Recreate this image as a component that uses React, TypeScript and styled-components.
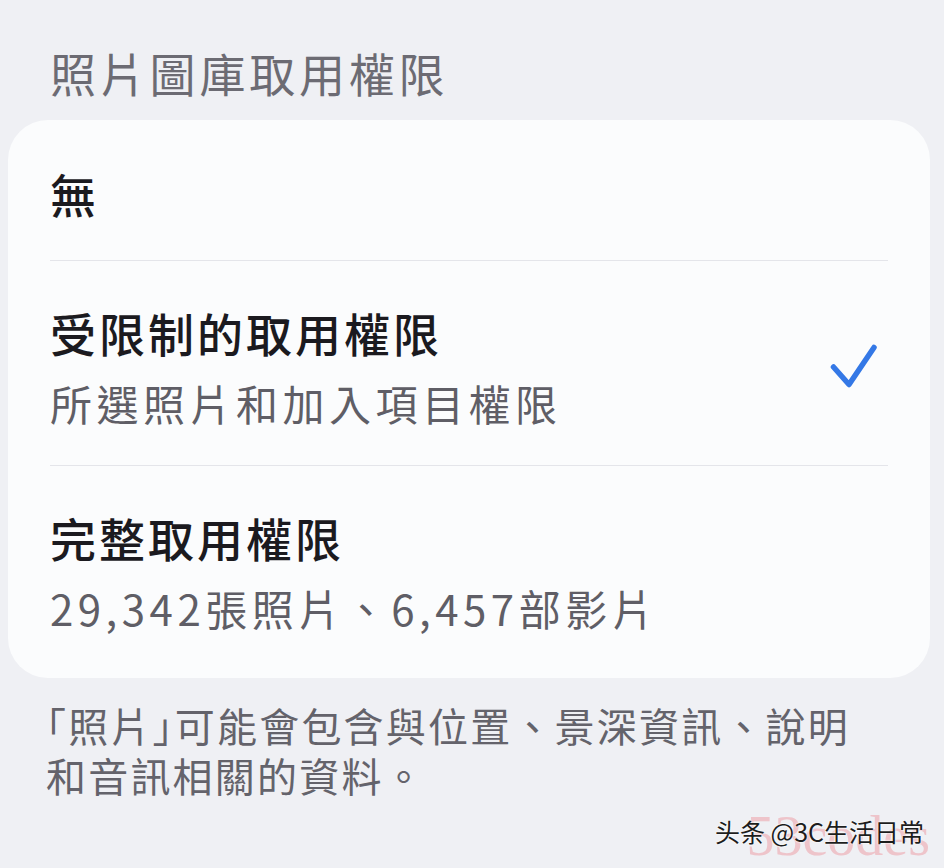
import * as React from 'react';
import styled, { createGlobalStyle } from 'styled-components';

const GlobalStyle = createGlobalStyle`
  html, body {
    margin: 0;
    padding: 0;
    background: #eff0f4;
  }
  body {
    font-family: "Noto Sans CJK TC", "Noto Sans", sans-serif;
    -webkit-font-smoothing: antialiased;
  }
`;

type Option = {
  id: string;
  title: string;
  subtitle?: string;
  selected?: boolean;
};

const options: Option[] = [
  { id: 'none', title: '無' },
  { id: 'limited', title: '受限制的取用權限', subtitle: '所選照片和加入項目權限', selected: true },
  { id: 'full', title: '完整取用權限', subtitle: '29,342張照片、6,457部影片' },
];

const Page = styled.div`
  position: relative;
  width: 944px;
  height: 868px;
  overflow: hidden;
  background: #eff0f4;
  padding-top: 48px;
  box-sizing: border-box;
`;

const SectionHeader = styled.div`
  margin: 0 0 24px 50px;
  font-size: 46px;
  line-height: 48px;
  letter-spacing: 3.8px;
  color: #6c6b73;
`;

const Card = styled.div`
  margin: 0 14px 0 8px;
  padding-bottom: 8px;
  background: #fbfcfd;
  border-radius: 40px;
  display: flex;
  flex-direction: column;
`;

const Row = styled.div<{ $last?: boolean }>`
  display: flex;
  align-items: center;
  min-height: 141px;
  margin: 0 42px;
  padding: 46px 0 40px;
  box-sizing: border-box;
  border-bottom: ${(p) => (p.$last ? 'none' : '1.5px solid #e4e5ea')};
`;

const Texts = styled.div`
  flex: 1;
  display: flex;
  flex-direction: column;
  gap: 24px;
`;

const Title = styled.div`
  font-size: 46px;
  line-height: 50px;
  font-weight: 500;
  letter-spacing: 3px;
  color: #1b1a1f;
`;

const Subtitle = styled.div`
  font-size: 42px;
  line-height: 44px;
  letter-spacing: 4.5px;
  color: #5f5e66;
`;

const Check = styled.svg`
  width: 48px;
  height: 48px;
  margin-right: 10px;
  flex: none;
`;

const Footer = styled.p`
  margin: 22px 80px 0 46px;
  font-size: 40px;
  line-height: 50px;
  letter-spacing: 2.2px;
  color: #64636b;
`;

const Quote = styled.span`
  font-feature-settings: 'halt';
`;

const Watermark = styled.div`
  position: absolute;
  right: 20px;
  bottom: 22px;
  font-family: "Noto Sans CJK SC", sans-serif;
  font-size: 25px;
  line-height: 30px;
  color: #1d1d1d;
  text-shadow: 0 0 2px #fff, 0 0 2px #fff;
`;

const WatermarkBack = styled.div`
  position: absolute;
  right: 14px;
  bottom: 4px;
  font-family: "Liberation Serif", serif;
  font-size: 56px;
  line-height: 56px;
  color: rgba(236, 160, 168, 0.55);
`;

const CheckIcon = () => (
  <Check viewBox="0 0 48 48" fill="none">
    <path
      d="M3.5 25 L19 42.5 L44 5.5"
      stroke="#3478e6"
      strokeWidth="5.5"
      strokeLinecap="round"
      strokeLinejoin="round"
    />
  </Check>
);

export default function App() {
  return (
    <>
      <GlobalStyle />
      <Page>
        <SectionHeader>照片圖庫取用權限</SectionHeader>
        <Card>
          {options.map((o, i) => (
            <Row key={o.id} $last={i === options.length - 1}>
              <Texts>
                <Title>{o.title}</Title>
                {o.subtitle && <Subtitle>{o.subtitle}</Subtitle>}
              </Texts>
              {o.selected && <CheckIcon />}
            </Row>
          ))}
        </Card>
        <Footer>
          <Quote>「照片」</Quote>可能會包含與位置、景深資訊、說明和音訊相關的資料。
        </Footer>
        <WatermarkBack>53codes</WatermarkBack>
        <Watermark>头条 @3C生活日常</Watermark>
      </Page>
    </>
  );
}
